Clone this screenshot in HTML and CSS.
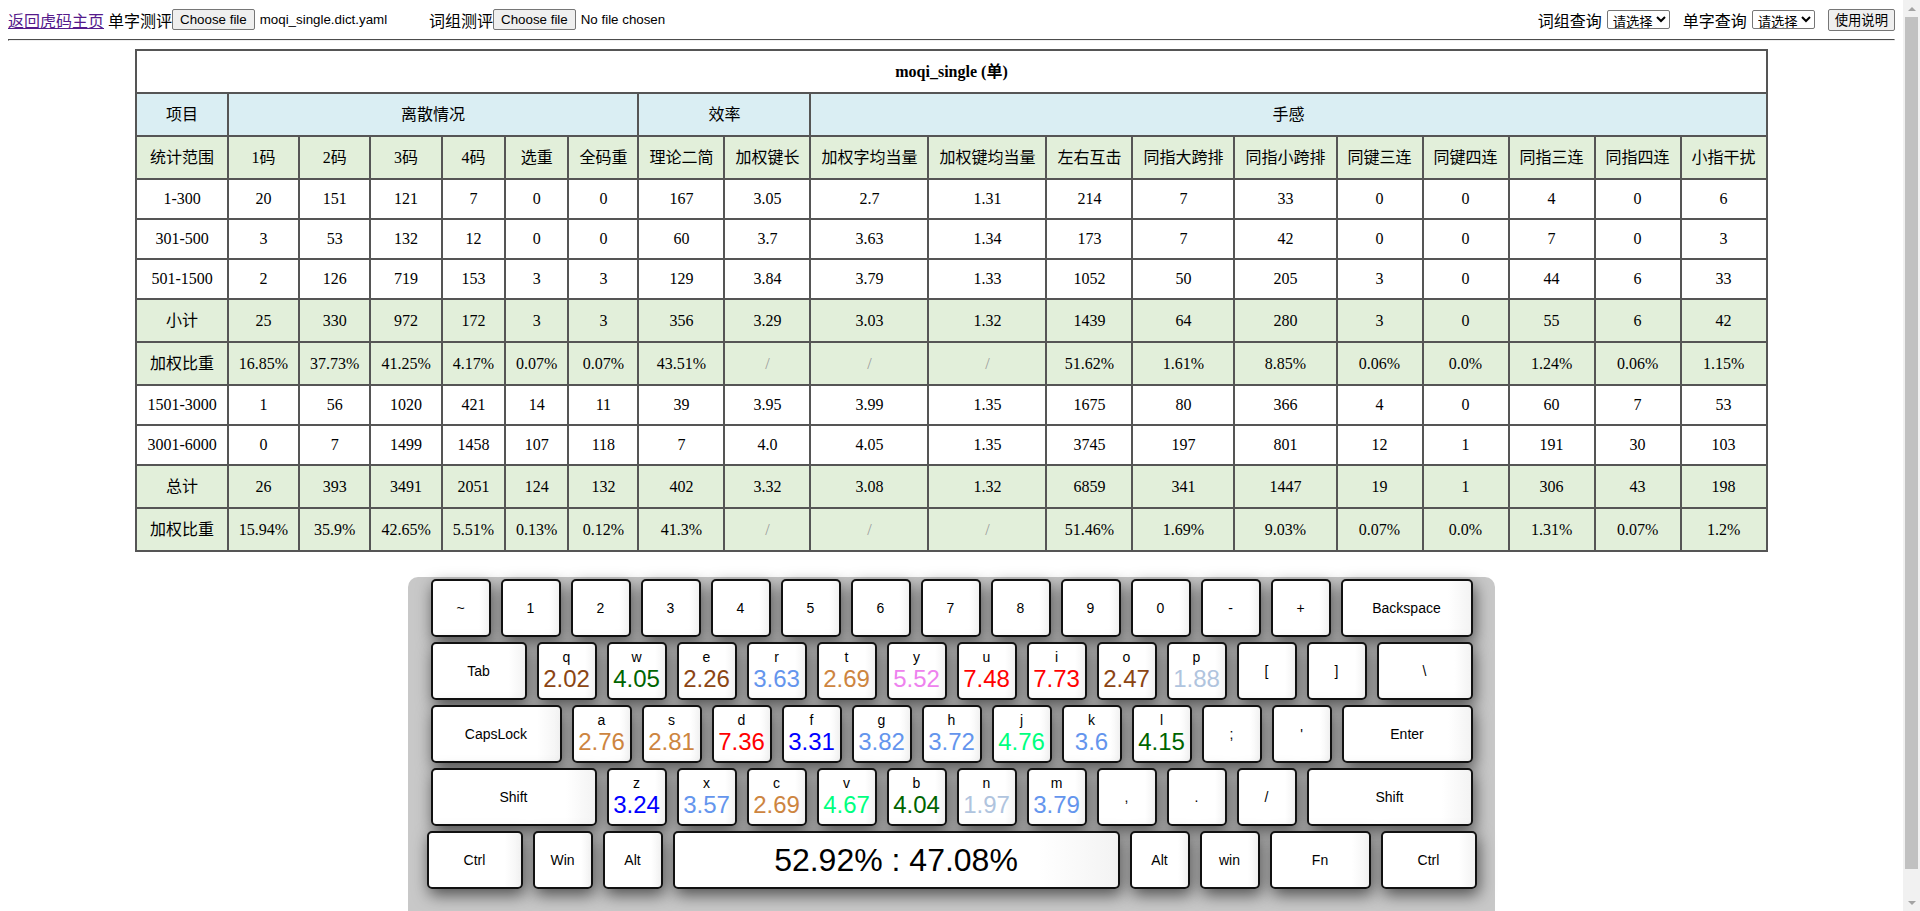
FILE: index.html
```html
<!DOCTYPE html>
<html lang="zh-CN">
<head>
<meta charset="utf-8">
<title>moqi_single 测评</title>
<link rel="stylesheet" href="styles.css">
</head>
<body>
<div class="topbar">
  <div class="tools">
    <a class="home" href="#">返回虎码主页</a>
    <span class="lbl">单字测评</span><span class="file"><span class="fbtn">Choose file</span><span class="fname">moqi_single.dict.yaml</span></span>
    <span class="lbl">词组测评</span><span class="file"><span class="fbtn">Choose file</span><span class="fname">No file chosen</span></span>
  </div>
  <div class="query">
    <span class="qlbl">词组查询</span><select class="sel"><option>请选择</option></select>
    <span class="qlbl">单字查询</span><select class="sel"><option>请选择</option></select>
    <button class="help">使用说明</button>
  </div>
</div>
<hr>
<table class="tbl">
  <tr class="title cjk"><td colspan="19">moqi_single (单)</td></tr>
  <tr class="blue cjk"><td>项目</td><td colspan="6">离散情况</td><td colspan="2">效率</td><td colspan="10">手感</td></tr>
  <tr class="green cjk"><td>统计范围</td><td>1码</td><td>2码</td><td>3码</td><td>4码</td><td>选重</td><td>全码重</td><td>理论二简</td><td>加权键长</td><td>加权字均当量</td><td>加权键均当量</td><td>左右互击</td><td>同指大跨排</td><td>同指小跨排</td><td>同键三连</td><td>同键四连</td><td>同指三连</td><td>同指四连</td><td>小指干扰</td></tr>
  <tr><td>1-300</td><td>20</td><td>151</td><td>121</td><td>7</td><td>0</td><td>0</td><td>167</td><td>3.05</td><td>2.7</td><td>1.31</td><td>214</td><td>7</td><td>33</td><td>0</td><td>0</td><td>4</td><td>0</td><td>6</td></tr>
  <tr><td>301-500</td><td>3</td><td>53</td><td>132</td><td>12</td><td>0</td><td>0</td><td>60</td><td>3.7</td><td>3.63</td><td>1.34</td><td>173</td><td>7</td><td>42</td><td>0</td><td>0</td><td>7</td><td>0</td><td>3</td></tr>
  <tr><td>501-1500</td><td>2</td><td>126</td><td>719</td><td>153</td><td>3</td><td>3</td><td>129</td><td>3.84</td><td>3.79</td><td>1.33</td><td>1052</td><td>50</td><td>205</td><td>3</td><td>0</td><td>44</td><td>6</td><td>33</td></tr>
  <tr class="green cjk"><td>小计</td><td>25</td><td>330</td><td>972</td><td>172</td><td>3</td><td>3</td><td>356</td><td>3.29</td><td>3.03</td><td>1.32</td><td>1439</td><td>64</td><td>280</td><td>3</td><td>0</td><td>55</td><td>6</td><td>42</td></tr>
  <tr class="green cjk"><td>加权比重</td><td>16.85%</td><td>37.73%</td><td>41.25%</td><td>4.17%</td><td>0.07%</td><td>0.07%</td><td>43.51%</td><td class="na">/</td><td class="na">/</td><td class="na">/</td><td>51.62%</td><td>1.61%</td><td>8.85%</td><td>0.06%</td><td>0.0%</td><td>1.24%</td><td>0.06%</td><td>1.15%</td></tr>
  <tr><td>1501-3000</td><td>1</td><td>56</td><td>1020</td><td>421</td><td>14</td><td>11</td><td>39</td><td>3.95</td><td>3.99</td><td>1.35</td><td>1675</td><td>80</td><td>366</td><td>4</td><td>0</td><td>60</td><td>7</td><td>53</td></tr>
  <tr><td>3001-6000</td><td>0</td><td>7</td><td>1499</td><td>1458</td><td>107</td><td>118</td><td>7</td><td>4.0</td><td>4.05</td><td>1.35</td><td>3745</td><td>197</td><td>801</td><td>12</td><td>1</td><td>191</td><td>30</td><td>103</td></tr>
  <tr class="green cjk"><td>总计</td><td>26</td><td>393</td><td>3491</td><td>2051</td><td>124</td><td>132</td><td>402</td><td>3.32</td><td>3.08</td><td>1.32</td><td>6859</td><td>341</td><td>1447</td><td>19</td><td>1</td><td>306</td><td>43</td><td>198</td></tr>
  <tr class="green cjk"><td>加权比重</td><td>15.94%</td><td>35.9%</td><td>42.65%</td><td>5.51%</td><td>0.13%</td><td>0.12%</td><td>41.3%</td><td class="na">/</td><td class="na">/</td><td class="na">/</td><td>51.46%</td><td>1.69%</td><td>9.03%</td><td>0.07%</td><td>0.0%</td><td>1.31%</td><td>0.07%</td><td>1.2%</td></tr>
</table>

<div class="kb">
  <div class="row">
    <div class="key">~</div><div class="key">1</div><div class="key">2</div><div class="key">3</div><div class="key">4</div><div class="key">5</div><div class="key">6</div><div class="key">7</div><div class="key">8</div><div class="key">9</div><div class="key">0</div><div class="key">-</div><div class="key">+</div><div class="key w132">Backspace</div>
  </div>
  <div class="row">
    <div class="key w96">Tab</div>
    <div class="key"><span class="ch">q</span><span class="val c-sb">2.02</span></div>
    <div class="key"><span class="ch">w</span><span class="val c-dg">4.05</span></div>
    <div class="key"><span class="ch">e</span><span class="val c-sb">2.26</span></div>
    <div class="key"><span class="ch">r</span><span class="val c-cb">3.63</span></div>
    <div class="key"><span class="ch">t</span><span class="val c-pe">2.69</span></div>
    <div class="key"><span class="ch">y</span><span class="val c-vi">5.52</span></div>
    <div class="key"><span class="ch">u</span><span class="val c-rd">7.48</span></div>
    <div class="key"><span class="ch">i</span><span class="val c-rd">7.73</span></div>
    <div class="key"><span class="ch">o</span><span class="val c-sb">2.47</span></div>
    <div class="key"><span class="ch">p</span><span class="val c-ls">1.88</span></div>
    <div class="key">[</div><div class="key">]</div><div class="key w96">\</div>
  </div>
  <div class="row">
    <div class="key w131">CapsLock</div>
    <div class="key"><span class="ch">a</span><span class="val c-pe">2.76</span></div>
    <div class="key"><span class="ch">s</span><span class="val c-pe">2.81</span></div>
    <div class="key"><span class="ch">d</span><span class="val c-rd">7.36</span></div>
    <div class="key"><span class="ch">f</span><span class="val c-bl">3.31</span></div>
    <div class="key"><span class="ch">g</span><span class="val c-cb">3.82</span></div>
    <div class="key"><span class="ch">h</span><span class="val c-cb">3.72</span></div>
    <div class="key"><span class="ch">j</span><span class="val c-sg">4.76</span></div>
    <div class="key"><span class="ch">k</span><span class="val c-cb">3.6</span></div>
    <div class="key"><span class="ch">l</span><span class="val c-dg">4.15</span></div>
    <div class="key">;</div><div class="key">'</div><div class="key w131">Enter</div>
  </div>
  <div class="row">
    <div class="key w166">Shift</div>
    <div class="key"><span class="ch">z</span><span class="val c-bl">3.24</span></div>
    <div class="key"><span class="ch">x</span><span class="val c-cb">3.57</span></div>
    <div class="key"><span class="ch">c</span><span class="val c-pe">2.69</span></div>
    <div class="key"><span class="ch">v</span><span class="val c-sg">4.67</span></div>
    <div class="key"><span class="ch">b</span><span class="val c-dg">4.04</span></div>
    <div class="key"><span class="ch">n</span><span class="val c-ls">1.97</span></div>
    <div class="key"><span class="ch">m</span><span class="val c-cb">3.79</span></div>
    <div class="key">,</div><div class="key">.</div><div class="key">/</div><div class="key w166">Shift</div>
  </div>
  <div class="row">
    <div class="key w96">Ctrl</div><div class="key">Win</div><div class="key">Alt</div>
    <div class="key space">52.92% : 47.08%</div>
    <div class="key">Alt</div><div class="key">win</div><div class="key w101">Fn</div><div class="key w96">Ctrl</div>
  </div>
</div>

<div class="vscroll" aria-hidden="true">
  <span class="sb-btn"><span class="sb-up"></span></span>
  <span class="sb-track"><span class="sb-thumb"></span></span>
  <span class="sb-btn"><span class="sb-down"></span></span>
</div>
</body>
</html>
```

FILE: styles.css
```css
html {
  overflow-y: scroll;
}
body {
  margin: 8px 25px 8px 8px;
  font-family: "Noto Sans CJK SC", sans-serif;
  font-size: 16px;
  color: #000;
  background: #fff;
}

/* window scrollbar (drawn, since the capture hides the native one) */
.vscroll {
  position: fixed;
  top: 0;
  right: 0;
  width: 17px;
  height: 100vh;
  background: #f1f1f1;
  display: flex;
  flex-direction: column;
}
.sb-btn {
  height: 17px;
  flex: none;
  display: flex;
  align-items: center;
  justify-content: center;
}
.sb-up, .sb-down {
  width: 0;
  height: 0;
  border-left: 4px solid transparent;
  border-right: 4px solid transparent;
}
.sb-up {
  border-bottom: 4px solid #a3a3a3;
}
.sb-down {
  border-top: 4px solid #a3a3a3;
}
.sb-track {
  flex: 1;
  display: flex;
  flex-direction: column;
  padding: 0 2px;
}
.sb-thumb {
  height: 852px;
  background: #c1c1c1;
}

.topbar {
  display: flex;
  justify-content: space-between;
  align-items: center;
  height: 23px;
  white-space: nowrap;
}
.tools, .query {
  display: flex;
  align-items: center;
}
.home {
  color: #551a8b;
  text-decoration: underline;
}
.lbl {
  margin-left: 4px;
}
.file {
  display: inline-flex;
  align-items: center;
  width: 253px;
  font-family: "Liberation Sans", Arial, sans-serif;
  font-size: 13.33px;
}
.fbtn, .help {
  box-sizing: border-box;
  height: 21px;
  padding: 0 7px;
  border: 1px solid #767676;
  border-radius: 2px;
  background: #efefef;
  line-height: 19px;
  color: #000;
}
.fname {
  margin-left: 5px;
}
.qlbl {
  margin-left: 13px;
  margin-right: 5px;
}
.qlbl:first-child {
  margin-left: 0;
}
.sel {
  box-sizing: border-box;
  width: 63px;
  height: 19px;
  padding: 0 0 0 1px;
  font-family: "Noto Sans CJK SC", sans-serif;
  font-size: 13.33px;
  border: 1px solid #767676;
  border-radius: 2px;
  background: #fff;
  color: #000;
}
.help {
  height: 22px;
  margin-left: 13px;
  font-family: "Noto Sans CJK SC", sans-serif;
  font-size: 13.33px;
  padding: 0 6px;
  line-height: 20px;
}
hr {
  margin: 8px 0;
  border: 1px inset #eee;
  border-top-color: #a0a0a0;
  border-left-color: #a0a0a0;
}

.tbl {
  margin: 0 auto;
  border-collapse: separate;
  border-spacing: 0;
  border: 1px solid #555;
  font-family: "Liberation Serif", "Noto Sans CJK SC", serif;
  font-size: 16px;
}
.tbl td {
  border: 1px solid #555;
  padding: 10px;
  text-align: center;
  line-height: 18px;
  white-space: nowrap;
}
.tbl .cjk td {
  line-height: 21px;
}
.tbl .title td {
  font-weight: bold;
}
.tbl .blue td {
  background: #daeef3;
}
.tbl .green td {
  background: #e2efda;
}
.tbl td.na {
  color: #999;
}

.kb {
  box-sizing: border-box;
  width: 1087px;
  margin: 25px auto 0;
  padding: 2px 0 43px;
  background: #c8c8c8;
  border-radius: 10px;
  display: flex;
  flex-direction: column;
  gap: 5px;
}
.row {
  display: flex;
  justify-content: center;
}
.key {
  box-sizing: border-box;
  width: 60px;
  height: 58px;
  margin: 0 5px;
  border: 2px solid #111;
  border-radius: 5px;
  background: linear-gradient(90deg, #fff 0%, #fff 82%, #f3f3f3 100%);
  box-shadow: 2px 6px 16px rgba(0, 0, 0, 0.6);
  display: flex;
  flex-direction: column;
  align-items: center;
  justify-content: center;
  font-family: "Liberation Sans", Arial, sans-serif;
  font-size: 14px;
  color: #000;
  flex: none;
}
.w96 { width: 96px; }
.w101 { width: 101px; }
.w131 { width: 131px; }
.w132 { width: 132px; }
.w166 { width: 166px; }
.space {
  width: 447px;
  font-size: 32px;
}
.ch {
  line-height: 16px;
}
.val {
  font-size: 24px;
  line-height: 28px;
}
.c-sb { color: #8b4513; }
.c-dg { color: #006400; }
.c-cb { color: #6495ed; }
.c-pe { color: #cd853f; }
.c-vi { color: #ee82ee; }
.c-rd { color: #ff0000; }
.c-ls { color: #b0c4de; }
.c-bl { color: #0000ff; }
.c-sg { color: #00ff7f; }
```
